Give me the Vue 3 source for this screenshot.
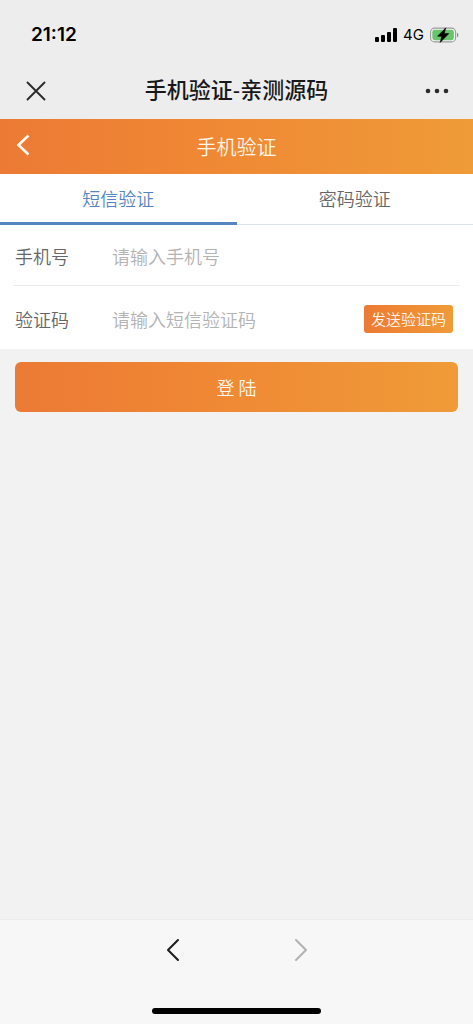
<script setup>
import { ref } from 'vue'

const tabs = ['短信验证', '密码验证']
const active = ref(0)
const phone = ref('')
const code = ref('')
</script>

<template>
  <div class="screen">
    <div class="status">
      <time class="clock">21:12</time>
      <div class="indicators">
        <svg class="signal" width="22" height="14" viewBox="0 0 22 14" aria-hidden="true">
          <rect x="0" y="9" width="4" height="5" rx="1" />
          <rect x="6" y="7" width="4" height="7" rx="1" />
          <rect x="12" y="4" width="4" height="10" rx="1" />
          <rect x="18" y="0" width="4" height="14" rx="1" />
        </svg>
        <span class="network">4G</span>
        <svg width="29" height="16" viewBox="0 0 29 16" aria-hidden="true">
          <rect x="0.6" y="1.1" width="25" height="13.8" rx="4" fill="#f4f4f4" stroke="#9a9a9a" stroke-width="1.1" />
          <rect x="2.3" y="2.8" width="21.6" height="10.4" rx="2.4" fill="#69c56c" />
          <path d="M27 5.7c1.8.5 1.8 4.1 0 4.6z" fill="#8a8a8a" />
          <path d="M15.8.8 7.6 9.2h4.2l-1.6 6.2 8.6-8.8h-4.6z" fill="#000" stroke="#000" stroke-width="0.6" />
        </svg>
      </div>
    </div>

    <div class="webview-bar">
      <button class="plain close" type="button" aria-label="关闭">
        <svg width="20" height="20" viewBox="0 0 20 20" aria-hidden="true">
          <path d="M1.5 1.5l17 17M18.5 1.5l-17 17" fill="none" stroke="#2b2b2e" stroke-width="1.9" stroke-linecap="round" />
        </svg>
      </button>
      <div class="page-title">手机验证-亲测源码</div>
      <button class="plain more" type="button" aria-label="更多">
        <svg width="24" height="6" viewBox="0 0 24 6" fill="#2b2b2e" aria-hidden="true">
          <circle cx="3" cy="3" r="2.3" />
          <circle cx="12" cy="3" r="2.3" />
          <circle cx="21" cy="3" r="2.3" />
        </svg>
      </button>
    </div>

    <header class="header">
      <button class="plain back" type="button" aria-label="返回">
        <svg width="14" height="22" viewBox="0 0 14 22" aria-hidden="true">
          <path d="M12.5 1.5L2.5 11l10 9.5" fill="none" stroke="#fff8ee" stroke-width="2.6" />
        </svg>
      </button>
      <h1>手机验证</h1>
    </header>

    <nav class="tabs">
      <button
        v-for="(tab, i) in tabs"
        :key="tab"
        type="button"
        class="plain tab"
        :class="{ active: active === i }"
        @click="active = i"
      >{{ tab }}</button>
    </nav>

    <form class="form" @submit.prevent>
      <div class="fields">
        <div class="row">
          <label for="phone">手机号</label>
          <input id="phone" v-model="phone" type="tel" placeholder="请输入手机号" />
        </div>
        <div class="row">
          <label for="code">验证码</label>
          <input id="code" v-model="code" type="text" placeholder="请输入短信验证码" />
          <button class="send" type="button">发送验证码</button>
        </div>
      </div>
      <button class="login" type="submit">登 陆</button>
    </form>

    <footer class="toolbar">
      <div class="history">
        <button class="plain" type="button" aria-label="后退">
          <svg width="14" height="24" viewBox="0 0 14 24" aria-hidden="true">
            <path d="M12 2L2 12l10 10" fill="none" stroke="#1c1c1e" stroke-width="2" stroke-linecap="round" stroke-linejoin="round" />
          </svg>
        </button>
        <button class="plain" type="button" aria-label="前进">
          <svg width="14" height="24" viewBox="0 0 14 24" aria-hidden="true">
            <path d="M2 2l10 10L2 22" fill="none" stroke="#b2b2b2" stroke-width="2" stroke-linecap="round" stroke-linejoin="round" />
          </svg>
        </button>
      </div>
      <div class="home-indicator"></div>
    </footer>
  </div>
</template>

<style>
body {
  margin: 0;
}
</style>

<style scoped>
.screen {
  --brand: linear-gradient(90deg, #ec7a35, #ef8534 35%, #ef9b38);
  display: flex;
  flex-direction: column;
  min-height: 100vh;
  background: #f2f2f2;
  color: #666;
  font-family: "Noto Sans CJK SC", sans-serif;
  font-weight: 350;
}

button,
input {
  box-sizing: border-box;
  margin: 0;
  font: inherit;
}

button {
  cursor: pointer;
}

.plain {
  border: 0;
  padding: 0;
  background: none;
  color: inherit;
}

svg {
  display: block;
}

.status {
  display: flex;
  justify-content: space-between;
  align-items: center;
  height: 64px;
  padding: 5px 14px 0 31px;
  box-sizing: border-box;
  background: #ededed;
  color: #000;
}

.clock {
  font: 600 19px/24px Inter, sans-serif;
}

.indicators {
  display: flex;
  align-items: center;
  gap: 6px;
}

.network {
  font: 400 15px/20px Inter, sans-serif;
}

.webview-bar {
  display: grid;
  grid-template-columns: 60px 1fr 60px;
  align-items: center;
  height: 55px;
  box-sizing: border-box;
  padding-bottom: 2px;
  background: #ededed;
  color: #181818;
}

.close {
  justify-self: end;
  margin-right: 14px;
}

.more {
  justify-self: start;
  margin-left: 12px;
}

.page-title {
  text-align: center;
  font-family: "Liberation Sans", "Noto Sans CJK SC", sans-serif;
  font-size: 22px;
  font-weight: 500;
  line-height: 32px;
}

.header {
  display: grid;
  grid-template-columns: 60px 1fr 60px;
  align-items: center;
  height: 55px;
  background: var(--brand);
  color: #fff5e8;
}

.back {
  justify-self: start;
  margin: 0 0 3px 16px;
}

h1 {
  margin: 0;
  text-align: center;
  font-size: 20px;
  font-weight: 350;
  line-height: 28px;
}

.tabs {
  display: flex;
  background: #fff;
  border-bottom: 1px solid #dbe3ea;
}

.tab {
  flex: 1;
  height: 51px;
  margin-bottom: -1px;
  border-bottom: 3px solid transparent;
  font-size: 18px;
}

.tab.active {
  border-color: #5585c0;
  color: #5585c0;
}

.form {
  flex: 1;
}

.fields {
  background: #fff;
  padding: 0 13px;
}

.row {
  display: flex;
  align-items: center;
  height: 60px;
  box-sizing: border-box;
  padding: 2px 7px 0 2px;
  font-size: 18px;
  line-height: 28px;
}

.row + .row {
  height: 64px;
  border-top: 1px solid #ebebeb;
}

.row label {
  width: 97px;
  flex: none;
}

.row input {
  flex: 1;
  min-width: 0;
  height: 40px;
  border: 0;
  padding: 0;
  outline: 0;
  background: none;
  color: #666;
}

.row input::placeholder {
  color: #b3b3b3;
  opacity: 1;
}

.send {
  width: 89px;
  height: 28px;
  border: 0;
  border-radius: 3px;
  padding: 0;
  background: var(--brand);
  color: #fff5e8;
  font-size: 15px;
  white-space: nowrap;
}

.login {
  display: block;
  width: calc(100% - 30px);
  height: 50px;
  margin: 13px 15px;
  border: 0;
  border-radius: 6px;
  background: var(--brand);
  color: #fff5e8;
  font-size: 18px;
}

.toolbar {
  display: flex;
  flex-direction: column;
  align-items: center;
  justify-content: space-between;
  height: 105px;
  box-sizing: border-box;
  border-top: 1px solid #ececec;
  padding: 18px 0 10px;
  background: #f7f7f7;
}

.history {
  display: flex;
  gap: 114px;
}

.home-indicator {
  width: 169px;
  height: 6px;
  border-radius: 3px;
  background: #000;
}
</style>
